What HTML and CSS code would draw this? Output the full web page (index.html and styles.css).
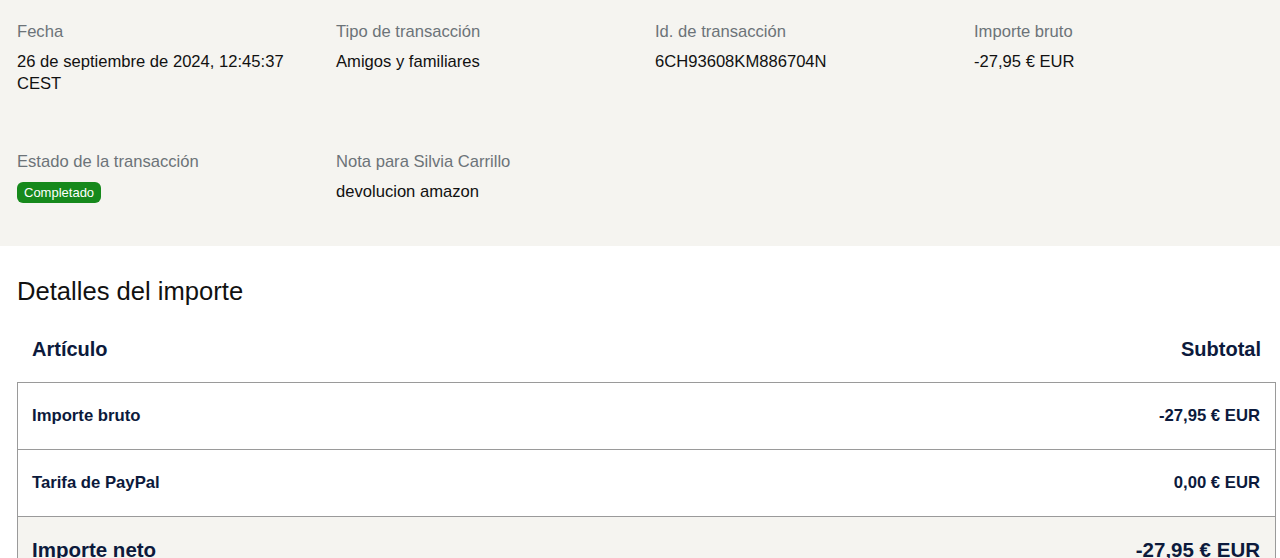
FILE: index.html
```html
<!DOCTYPE html>
<html lang="es">
<head>
<meta charset="utf-8">
<title>Detalles de la transacción</title>
<link rel="stylesheet" href="styles.css">
</head>
<body>
<section class="summary">
  <div class="grid">
    <div class="field">
      <div class="label">Fecha</div>
      <div class="value">26 de septiembre de 2024, 12:45:37<br>CEST</div>
    </div>
    <div class="field">
      <div class="label">Tipo de transacción</div>
      <div class="value">Amigos y familiares</div>
    </div>
    <div class="field">
      <div class="label">Id. de transacción</div>
      <div class="value">6CH93608KM886704N</div>
    </div>
    <div class="field">
      <div class="label">Importe bruto</div>
      <div class="value">-27,95 € EUR</div>
    </div>
    <div class="field">
      <div class="label">Estado de la transacción</div>
      <div class="value"><span class="badge">Completado</span></div>
    </div>
    <div class="field">
      <div class="label">Nota para Silvia Carrillo</div>
      <div class="value">devolucion amazon</div>
    </div>
  </div>
</section>
<section class="details">
  <h2 class="title">Detalles del importe</h2>
  <div class="thead">
    <span>Artículo</span>
    <span>Subtotal</span>
  </div>
  <div class="table">
    <div class="row">
      <span>Importe bruto</span>
      <span>-27,95 € EUR</span>
    </div>
    <div class="row">
      <span>Tarifa de PayPal</span>
      <span>0,00 € EUR</span>
    </div>
    <div class="row total">
      <span>Importe neto</span>
      <span>-27,95 € EUR</span>
    </div>
  </div>
</section>
</body>
</html>
```

FILE: styles.css
```css
* { box-sizing: border-box; }
html, body { margin: 0; padding: 0; }
body {
  font-family: "Liberation Sans", Arial, sans-serif;
  background: #ffffff;
  color: #000;
  overflow: hidden;
}
.summary {
  background: #f5f4f0;
  padding: 21px 0 43px 17px;
}
.grid {
  display: grid;
  grid-template-columns: repeat(4, 319px);
  row-gap: 56px;
}
.label {
  font-size: 16.6px;
  line-height: 22px;
  color: #6c7378;
  margin-bottom: 8px;
}
.value {
  font-size: 16.6px;
  line-height: 22px;
  color: #111;
}
.badge {
  display: inline-block;
  background: #16891c;
  color: #fff;
  font-size: 13px;
  line-height: 17px;
  padding: 2px 7px;
  border-radius: 6px;
  margin-top: 1px;
}
.details {
  padding: 29px 4px 0 17px;
}
.title {
  margin: 0;
  font-weight: normal;
  font-size: 25.6px;
  line-height: 32px;
  color: #111;
}
.thead {
  display: flex;
  justify-content: space-between;
  padding: 28px 15px 19px 15px;
  font-size: 20px;
  line-height: 28px;
  font-weight: bold;
  color: #0c1a3c;
}
.table {
  border: 1px solid #9a9a9a;
  border-bottom: none;
}
.row {
  display: flex;
  justify-content: space-between;
  align-items: center;
  height: 67px;
  padding: 0 15px 0 14px;
  font-size: 16.7px;
  font-weight: bold;
  color: #0c1a3c;
  border-bottom: 1px solid #9a9a9a;
}
.row.total {
  background: #f5f4f0;
  font-size: 20.5px;
  height: 67px;
}
```
